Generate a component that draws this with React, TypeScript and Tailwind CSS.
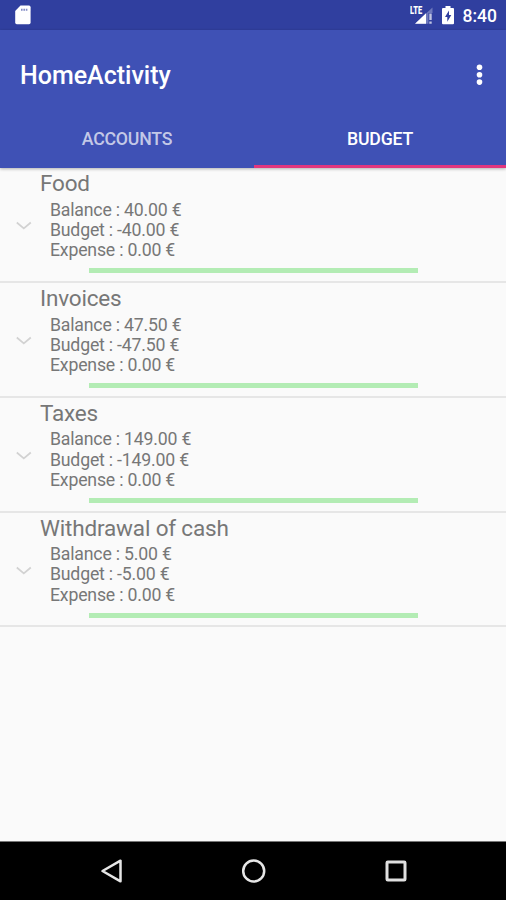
import { FC } from "react";

interface BudgetItem {
  name: string;
  balance: string;
  budget: string;
  expense: string;
}

const budgets: BudgetItem[] = [
  { name: "Food", balance: "40.00", budget: "-40.00", expense: "0.00" },
  { name: "Invoices", balance: "47.50", budget: "-47.50", expense: "0.00" },
  { name: "Taxes", balance: "149.00", budget: "-149.00", expense: "0.00" },
  { name: "Withdrawal of cash", balance: "5.00", budget: "-5.00", expense: "0.00" },
];

const StatusBar = () => (
  <div className="flex h-[30px] shrink-0 items-center bg-[#303f9f] pl-[15px] pr-[9px] text-white">
    {/* SD card */}
    <svg className="h-5 w-4" viewBox="0 0 16 20">
      <path
        fill="currentColor"
        fillRule="evenodd"
        d="M5.5 .6H14a1.6 1.6 0 0 1 1.6 1.6v15.400A1.6 1.6 0 0 1 14 19.2H1.8A1.6 1.6 0 0 1 .2 17.6V6z"
      />
      <path fill="#303f9f" fillOpacity="0.6" d="M6 3.800h1.600v2H6zM8.400 3.800H10v2H8.400zM10.800 3.800h1.600v2h-1.600z" />
    </svg>
    <div className="ml-auto flex items-center">
      <div className="relative mr-[9px] h-5 w-[23px]">
        <span className="absolute left-[0.500px] top-[1px] origin-left scale-x-[0.68] text-[11px] font-black leading-[10px]">
          LTE
        </span>
        <svg className="h-5 w-[23px]" viewBox="0 0 23 20">
          <path fill="currentColor" fillOpacity="0.3" d="M22.5 2.5v5.5h-4v10.700H5z" />
          <path fill="currentColor" d="M16 8.200v10.500H5z" />
          <path fill="currentColor" fillOpacity="0.7" d="M19.3 8.5h2.4v6.5h-2.4zM19.3 16.5h2.4v2.2h-2.4z" />
        </svg>
      </div>
      {/* Charging battery */}
      <svg className="mr-[9px] h-5 w-3" viewBox="0 0 12 20">
        <path
          fill="currentColor"
          fillRule="evenodd"
          d="M3.5 1h5v2H11a1 1 0 0 1 1 1v14.200a1 1 0 0 1-1 1H1a1 1 0 0 1-1-1V4a1 1 0 0 1 1-1h2.500zM7 5.500l-4 6.500h2.300v4.700L9.300 10H7z"
        />
      </svg>
      <span className="pt-[2px] text-[17.500px] font-medium leading-5">8:40</span>
    </div>
  </div>
);

const AppBar = () => (
  <header className="relative z-10 flex h-[138px] shrink-0 flex-col bg-[#3f51b5] shadow-[0_1px_3px_rgba(0,0,0,0.3)]">
    <div className="flex h-[71px] items-center justify-between pl-5 pr-[23px] pt-[19px]">
      <h1 className="pt-[2px] text-[25px] font-medium leading-[30px] text-white">HomeActivity</h1>
      <svg className="h-[22px] w-[7px]" viewBox="0 0 7 22" fill="#fff">
        <circle cx="3.5" cy="3.3" r="2.8" />
        <circle cx="3.5" cy="10.7" r="2.8" />
        <circle cx="3.5" cy="18.1" r="2.8" />
      </svg>
    </div>
    <nav className="grid flex-1 grid-cols-[254px_252px] text-[17.700px] font-medium tracking-[-0.200px]">
      <button className="pt-[9px] text-white/70">ACCOUNTS</button>
      <button className="border-b-[3px] border-[#e2367e] pt-[12px] text-white">BUDGET</button>
    </nav>
  </header>
);

const BudgetRow: FC<{ item: BudgetItem }> = ({ item }) => (
  <li className="flex h-[114.800px] border-b-2 border-[#e6e6e6]">
    <div className="w-10 shrink-0 pl-4 pt-[53px]">
      <svg className="h-[10px] w-4" viewBox="0 0 16 10" fill="none">
        <path d="M0.8 1.5l7 6 7-6" stroke="#d2d2d2" strokeWidth="1.7" />
      </svg>
    </div>
    <div className="flex-1 pt-[2px] text-[#777]">
      <h2 className="text-[22.500px] leading-[27px] tracking-[-0.170px]">{item.name}</h2>
      <div className="pl-[10px] pt-[2.500px] text-[17.700px] leading-[20.200px] tracking-[-0.200px]">
        <p>Balance : {item.balance} €</p>
        <p>Budget : {item.budget} €</p>
        <p>Expense : {item.expense} €</p>
      </div>
      <div className="ml-[49px] mt-[8px] h-[5px] w-[329px] bg-[#b3ecb4]" />
    </div>
  </li>
);

const NavBar = () => (
  <div className="flex h-[59px] shrink-0 items-center justify-between border-t border-[#777] bg-black pl-[100px] pr-[98px]">
    <svg className="h-7 w-6" viewBox="0 0 24 28" fill="none" stroke="#e6e6e6" strokeWidth="2.5">
      <path d="M20.5 3.7v20.600L2.500 14z" strokeLinejoin="round" />
    </svg>
    <svg className="h-7 w-7" viewBox="0 0 28 28" fill="none" stroke="#e6e6e6" strokeWidth="2.5">
      <circle cx="13.7" cy="14" r="10.5" />
    </svg>
    <svg className="h-7 w-6" viewBox="0 0 24 28" fill="none" stroke="#e0e0e0" strokeWidth="3">
      <rect x="3" y="5" width="18" height="18" rx="0.8" />
    </svg>
  </div>
);

const App = () => {
  return (
    <div className="flex h-[900px] w-[506px] flex-col overflow-hidden bg-[#fafafa] font-[Roboto,sans-serif]">
      <StatusBar />
      <AppBar />
      <ul className="flex-1 pt-[0.300px]">
        {budgets.map((item) => (
          <BudgetRow key={item.name} item={item} />
        ))}
      </ul>
      <NavBar />
    </div>
  );
};

export default App;
